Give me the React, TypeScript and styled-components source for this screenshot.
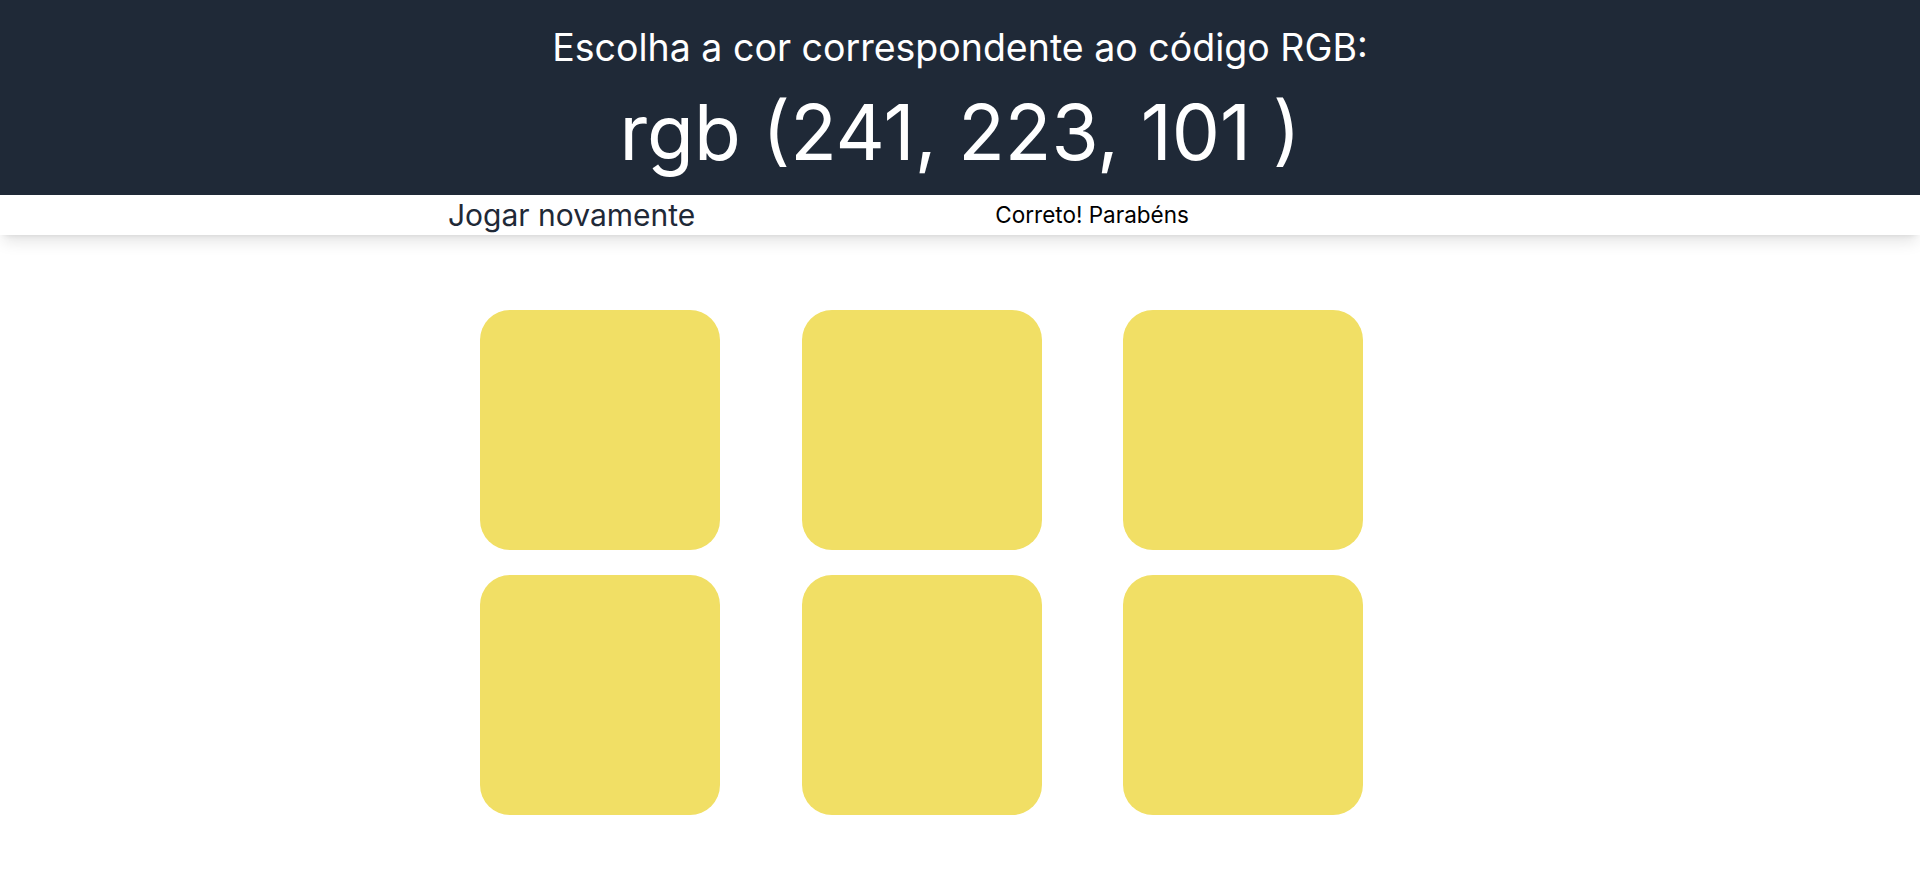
import React from 'react';
import styled, { createGlobalStyle } from 'styled-components';

const GlobalStyle = createGlobalStyle`
  html, body {
    margin: 0;
    padding: 0;
    background: #ffffff;
    font-family: Inter, "Noto Sans", Arial, sans-serif;
  }
  * {
    box-sizing: border-box;
  }
`;

const Header = styled.header`
  background-color: #1f2937;
  color: #ffffff;
  display: flex;
  flex-direction: column;
  align-items: center;
  height: 195px;
  padding-top: 28px;
`;

const Title = styled.h1`
  margin: 0;
  font-size: 37.5px;
  line-height: 40px;
  font-weight: 400;
`;

const RgbCode = styled.h2`
  margin: 26px 0 0;
  font-size: 76.5px;
  line-height: 1;
  font-weight: 400;
`;

const Toolbar = styled.div`
  height: 40px;
  display: flex;
  align-items: center;
  padding-left: 448px;
  gap: 300px;
  background: #ffffff;
  box-shadow: 0 10px 15px -3px rgba(0, 0, 0, 0.1), 0 4px 6px -4px rgba(0, 0, 0, 0.1);
`;

const PlayAgain = styled.button`
  border: 0;
  background: transparent;
  padding: 0;
  font-family: inherit;
  font-size: 30px;
  line-height: 40px;
  color: #1f2937;
  cursor: pointer;
`;

const Message = styled.p`
  margin: 0;
  font-size: 22.5px;
  line-height: 32px;
  color: #000000;
`;

const Board = styled.main`
  display: grid;
  grid-template-columns: repeat(3, 240px);
  column-gap: 81.5px;
  row-gap: 25px;
  padding: 75px 0 0 480px;
`;

const Tile = styled.button<{ $color: string }>`
  width: 240px;
  height: 240px;
  border: 0;
  padding: 0;
  border-radius: 30px;
  background-color: ${(p) => p.$color};
  cursor: pointer;
`;

const target = { r: 241, g: 223, b: 101 };
const tiles = Array.from({ length: 6 }, () => `rgb(${target.r}, ${target.g}, ${target.b})`);

export default function App() {
  return (
    <>
      <GlobalStyle />
      <Header>
        <Title>Escolha a cor correspondente ao código RGB:</Title>
        <RgbCode>
          rgb ({target.r}, {target.g}, {target.b} )
        </RgbCode>
      </Header>
      <Toolbar>
        <PlayAgain>Jogar novamente</PlayAgain>
        <Message>Correto! Parabéns</Message>
      </Toolbar>
      <Board>
        {tiles.map((color, i) => (
          <Tile key={i} $color={color} />
        ))}
      </Board>
    </>
  );
}
